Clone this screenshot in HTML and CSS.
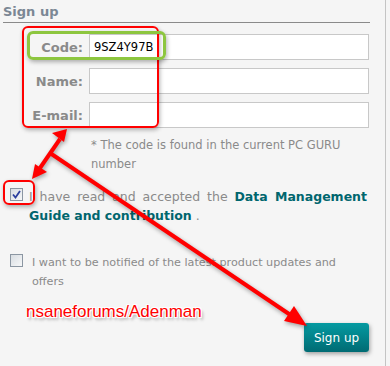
FILE: index.html
```html
<!DOCTYPE html>
<html lang="en">
<head>
    <meta charset="UTF-8">
    <title>Sign up</title>
    <link rel="stylesheet" href="styles.css">
</head>
<body>
    <div class="panel">
        <h2 class="title">Sign up</h2>

        <div class="fields">
            <div class="row">
                <label class="label">Code:</label>
                <input class="field" type="text" value="9SZ4Y97B">
            </div>
            <div class="row">
                <label class="label">Name:</label>
                <input class="field" type="text">
            </div>
            <div class="row">
                <label class="label">E-mail:</label>
                <input class="field" type="text">
            </div>
        </div>

        <p class="note">* The code is found in the current PC GURU number</p>

        <div class="check check-terms">
            <span class="box"><svg width="9" height="9" viewBox="0 0 9 9"><path d="M1 4.5 L3.5 7.5 L8 1" fill="none" stroke="#2b3f9e" stroke-width="1.8"/></svg></span>
            <p class="check-text">I have read and accepted the <b class="link">Data Management Guide and contribution</b> .</p>
        </div>

        <div class="check check-news">
            <span class="box"></span>
            <p class="check-text small">I want to be notified of the latest product updates and offers</p>
        </div>

        <div class="bottom">
            <span class="credit">nsaneforums/Adenman</span>
            <button class="submit">Sign up</button>
        </div>
    </div>

    <!-- annotation marks drawn over the form -->
    <div class="mark mark-fields"></div>
    <div class="mark mark-code"></div>
    <div class="mark mark-box"></div>
    <svg class="arrows" width="390" height="366" viewBox="0 0 390 366">
        <g fill="#ff0000" stroke="#ff0000">
            <line x1="60" y1="139" x2="40" y2="168" stroke-width="4"/>
            <polygon points="67,129 52,133 64,142" stroke="none"/>
            <polygon points="32,179 35,164 47,172" stroke="none"/>
            <line x1="50" y1="153" x2="292" y2="316" stroke-width="4"/>
            <polygon points="307,326 284,321 294,306" stroke="none"/>
        </g>
    </svg>
</body>
</html>
```

FILE: styles.css
```css
* {
    margin: 0;
    padding: 0;
    box-sizing: border-box;
}

body {
    font-family: "DejaVu Sans", Verdana, sans-serif;
    background: #f5f5f5;
    color: #8a8a8a;
    width: 390px;
    height: 366px;
    overflow: hidden;
    position: relative;
}

.panel {
    width: 386px;
    height: 366px;
    border-right: 1px solid #c4c4c4;
    padding: 4px 0 0 3px;
}

.title {
    width: 367px;
    font-size: 13px;
    font-weight: bold;
    color: #7b8794;
    padding-bottom: 2px;
    border-bottom: 1px solid #8a8a8a;
    line-height: 16px;
}

.fields {
    display: flex;
    flex-direction: column;
    gap: 8px;
    margin-top: 11px;
}

.row {
    display: flex;
    align-items: center;
    gap: 6px;
}

.label {
    width: 80px;
    text-align: right;
    font-size: 13px;
    font-weight: bold;
    color: #8a8a8a;
}

.field {
    width: 280px;
    height: 26px;
    border: 1px solid #c8c8c8;
    background: #fff;
    font-family: "DejaVu Sans", Verdana, sans-serif;
    font-size: 11.5px;
    color: #000;
    padding: 0 4px;
    outline: none;
}

.note {
    margin: 8px 0 0 88px;
    width: 270px;
    font-size: 11.5px;
    line-height: 19px;
    color: #8a8a8a;
}

.check {
    display: flex;
    align-items: flex-start;
    gap: 6px;
    padding-left: 7px;
}

.check-terms {
    margin-top: 13px;
}

.check-news {
    margin-top: 28px;
}

.box {
    flex: none;
    width: 13px;
    height: 13px;
    margin-top: 1px;
    border: 1px solid #8b96a2;
    background: linear-gradient(135deg, #d8dde2, #f6f7f8);
    display: flex;
    align-items: center;
    justify-content: center;
}

.check-text {
    width: 338px;
    font-size: 12.5px;
    line-height: 19px;
    text-align: justify;
    color: #8a8a8a;
}

.check-text.small {
    width: 330px;
    font-size: 11.2px;
    text-align: left;
    margin-left: 3px;
}

.link {
    font-weight: bold;
    color: #00666e;
}

.bottom {
    display: flex;
    justify-content: space-between;
    align-items: flex-start;
    width: 366px;
    margin-top: 11px;
    padding-left: 23px;
}

.credit {
    font-family: "Liberation Sans", Arial, sans-serif;
    font-size: 17px;
    color: #ff0000;
    text-shadow: 1px 1px 0 #fff, -1px -1px 0 #fff, 1px -1px 0 #fff, -1px 1px 0 #fff, 2px 3px 3px rgba(0, 0, 0, 0.35);
}

.submit {
    width: 65px;
    height: 29px;
    margin-top: 21px;
    border: none;
    border-radius: 3px;
    background: linear-gradient(#049aa1, #006b73);
    color: #fff;
    font-family: "DejaVu Sans", Verdana, sans-serif;
    font-size: 12px;
    box-shadow: 1px 2px 4px rgba(0, 0, 0, 0.35);
}

.mark {
    position: absolute;
    border-radius: 6px;
    box-shadow: 1px 2px 4px rgba(0, 0, 0, 0.3);
}

.mark-fields {
    left: 22px;
    top: 26px;
    width: 137px;
    height: 102px;
    border: 2px solid #ff0000;
}

.mark-code {
    left: 27px;
    top: 31px;
    width: 139px;
    height: 29px;
    border: 3px solid #8dc63f;
}

.mark-box {
    left: 3px;
    top: 180px;
    width: 32px;
    height: 25px;
    border: 2px solid #ff0000;
}

.arrows {
    position: absolute;
    left: 0;
    top: 0;
    filter: drop-shadow(1px 2px 2px rgba(0, 0, 0, 0.35));
}
```
